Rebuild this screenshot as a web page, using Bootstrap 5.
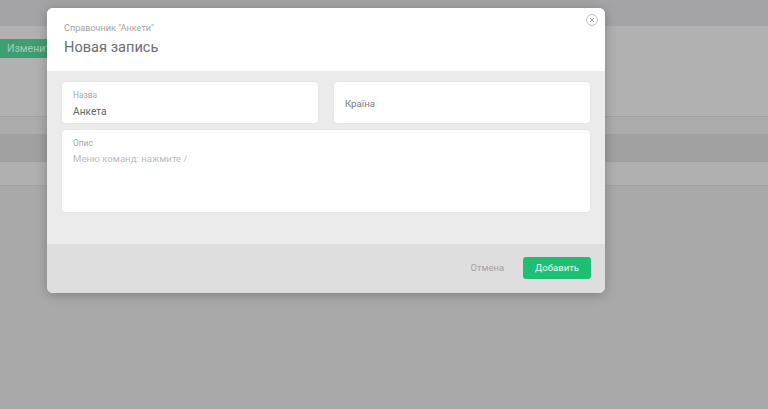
<!DOCTYPE html>
<html lang="ru"><head><meta charset="utf-8">
<link rel="stylesheet" href="https://cdn.jsdelivr.net/npm/bootstrap@5.3.0/dist/css/bootstrap.min.css">
<style>
html,body{height:409px;overflow:hidden}
body{background:#a9a9a9;font-family:Roboto,"Open Sans",sans-serif;position:relative}
.bg-top{height:26px;background:#a4a4a6}
.bg-tools{background:#b1b1b1;padding-top:13px;border-bottom:1px solid #a0a0a0;box-sizing:content-box;height:77px}
.bg-btn{width:60px;height:19px;background:#3f9d72;color:#a5cdb9;font-size:10.5px;line-height:19px;padding-left:7px}
.bg-a{height:17px;background:#acacac}
.bg-b{height:28px;background:#a0a0a0}
.bg-c{height:23px;background:#b0b0b0;border-bottom:1px solid #a2a2a2;box-sizing:content-box}
.dlg{position:absolute;left:47px;top:8px;width:558px;height:285px;border-radius:6px;overflow:hidden;box-shadow:0 2px 12px rgba(0,0,0,.25);display:flex;flex-direction:column;background:#fff}
.dlg-head{height:63px;background:#fff;padding:14px 17px 0;position:relative;flex:none}
.dlg-sub{font-size:9.1px;line-height:13px;color:#a3a3a3}
.dlg-title{font-size:14.6px;line-height:22px;margin-top:1px;color:#6b6e72}
.dlg-close{position:absolute;right:7px;top:6px;width:12px;height:12px;display:block}
.dlg-body{height:173px;background:#ebebeb;padding:11px 15px 0;flex:none}
.fld{background:#fff;border-radius:4px;box-shadow:0 0 2px rgba(0,0,0,.08);padding:8px 11px 0}
.fld-row{display:flex;gap:16px;margin-bottom:7px}
.fld-half{flex:1;height:41px}
.fld-lbl{font-size:8.4px;line-height:11px;color:#a8a8a8}
.fld-val{font-size:10.2px;line-height:15px;color:#62656a;margin-top:3px}
.fld-center{display:flex;align-items:center;padding-top:2px}
.fld-center .fld-val{font-size:9.7px;margin-top:0;color:#777a7e}
.fld-area{height:82px}
.fld-val.fld-ph{color:#bcbcbc;font-size:9.6px;margin-top:2px}
.dlg-foot{flex:1;background:#dedede;display:flex;justify-content:flex-end;align-items:center;padding:0 14px 1px 0;gap:19px}
.foot-cancel{font-size:9.4px;color:#a2a2a2}
.foot-add{width:68px;height:22px;background:#1cbf74;color:#e8f8f0;font-size:9.6px;line-height:22px;padding:0;border:0;border-radius:3px;text-align:center}
</style></head><body>
<div class="bg-top"></div>
<div class="bg-tools"><div class="bg-btn">Изменить</div></div>
<div class="bg-a"></div><div class="bg-b"></div><div class="bg-c"></div>
<div class="dlg">
  <div class="dlg-head">
    <div class="dlg-sub">Справочник "Анкети"</div>
    <div class="dlg-title">Новая запись</div>
    <svg class="dlg-close" viewBox="0 0 12 12" fill="none" stroke="#bdbdbd"><circle cx="6" cy="6" r="5.4"/><path d="M4 4l4 4M8 4l-4 4" stroke="#a8a8a8"/></svg>
  </div>
  <div class="dlg-body">
    <div class="fld-row">
      <div class="fld fld-half"><div class="fld-lbl">Назва</div><div class="fld-val">Анкета</div></div>
      <div class="fld fld-half fld-center"><div class="fld-val">Країна</div></div>
    </div>
    <div class="fld fld-area"><div class="fld-lbl">Опис</div><div class="fld-val fld-ph">Меню команд: нажмите /</div></div>
  </div>
  <div class="dlg-foot"><span class="foot-cancel">Отмена</span><button class="btn foot-add">Добавить</button></div>
</div>
</body></html>
